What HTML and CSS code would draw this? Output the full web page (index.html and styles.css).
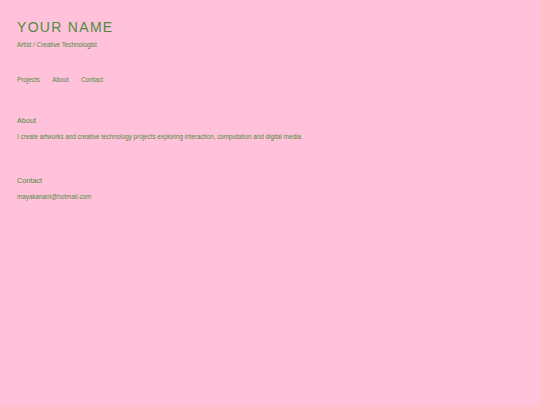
FILE: index.html
```html
<!DOCTYPE html>
<html lang="en">
<head>
<meta charset="utf-8">
<title>Your Name</title>
<link rel="stylesheet" href="styles.css">
</head>
<body>
<div class="page">
  <header class="header">
    <h1 class="name">YOUR NAME</h1>
    <p class="tagline">Artist / Creative Technologist</p>
  </header>
  <nav class="nav">
    <a href="#projects">Projects</a>
    <a href="#about">About</a>
    <a href="#contact">Contact</a>
  </nav>
  <section class="section about" id="about">
    <h2 class="section-title">About</h2>
    <p class="text">I create artworks and creative technology projects exploring interaction, computation and digital media.</p>
  </section>
  <section class="section contact" id="contact">
    <h2 class="section-title">Contact</h2>
    <p class="text">mayakanani@hotmail.com</p>
  </section>
</div>
</body>
</html>
```
FILE: styles.css
```css
html, body {
  margin: 0;
  padding: 0;
  background: #ffc2da;
}
body {
  font-family: "Liberation Sans", Arial, sans-serif;
  color: #4f8a3f;
  min-height: 405px;
}
.page {
  padding: 19px 17px 0;
}
.name {
  margin: 0;
  font-size: 14px;
  line-height: 16px;
  font-weight: normal;
  letter-spacing: 1.3px;
}
.tagline {
  margin: 5.5px 0 0;
  font-size: 6.3px;
  line-height: 8px;
}
.nav {
  margin-top: 27px;
  display: flex;
  gap: 12.5px;
  font-size: 6.3px;
  line-height: 8px;
}
.nav a {
  color: #4f8a3f;
  text-decoration: none;
}
.section-title {
  margin: 0;
  font-size: 7.3px;
  line-height: 10px;
  font-weight: normal;
}
.text {
  margin: 7px 0 0;
  font-size: 6.3px;
  line-height: 8px;
}
.about {
  margin-top: 32px;
}
.contact {
  margin-top: 35.5px;
}
```
